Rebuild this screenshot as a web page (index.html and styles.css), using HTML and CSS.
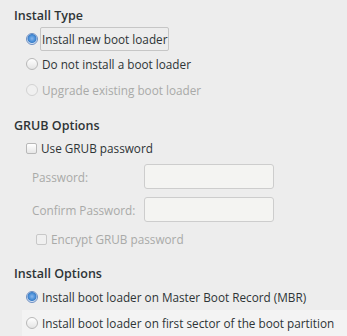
FILE: index.html
```html
<!DOCTYPE html>
<html lang="en">

<head>
    <meta charset="UTF-8">
    <title>Boot loader</title>
    <link rel="stylesheet" href="styles.css">
</head>

<body>
    <div class="page">
        <section class="group">
            <h2 class="group-title">Install Type</h2>
            <label class="option">
                <span class="radio checked"></span>
                <span class="text focused">Install new boot loader</span>
            </label>
            <label class="option">
                <span class="radio"></span>
                <span class="text">Do not install a boot loader</span>
            </label>
            <label class="option disabled">
                <span class="radio"></span>
                <span class="text">Upgrade existing boot loader</span>
            </label>
        </section>

        <section class="group grub">
            <h2 class="group-title">GRUB Options</h2>
            <label class="option check-row">
                <span class="check"></span>
                <span class="text">Use GRUB password</span>
            </label>
            <div class="field">
                <span class="field-label">Password:</span>
                <span class="entry"></span>
            </div>
            <div class="field">
                <span class="field-label">Confirm Password:</span>
                <span class="entry"></span>
            </div>
            <label class="option disabled sub">
                <span class="check"></span>
                <span class="text">Encrypt GRUB password</span>
            </label>
        </section>

        <section class="group opts">
            <h2 class="group-title">Install Options</h2>
            <label class="option">
                <span class="radio checked"></span>
                <span class="text">Install boot loader on Master Boot Record (MBR)</span>
            </label>
            <label class="option hover">
                <span class="radio"></span>
                <span class="text">Install boot loader on first sector of the boot partition</span>
            </label>
        </section>
    </div>
</body>

</html>
```

FILE: styles.css
```css
/* general */

body {
    margin: 0;
    background: #ededed;
    color: #2e3436;
    font-family: 'Open Sans', 'DejaVu Sans', sans-serif;
    font-size: 11.75px;
    overflow: hidden;
}

.page {
    padding-top: 6px;
}

.group-title {
    margin: 0 0 0 14px;
    height: 20px;
    line-height: 20px;
    font-size: 12.5px;
    font-weight: 600;
}

.option {
    display: flex;
    align-items: center;
    height: 25.5px;
    padding-left: 26px;
    gap: 2px;
}

.option .text {
    padding: 3px 1px;
    border: 1px solid transparent;
}

.option .text.focused {
    border-color: #c6c6c6;
    border-radius: 2px;
}

.option.disabled {
    color: #a9aaa8;
}

.option.hover {
    height: 26px;
    margin-left: 22px;
    padding-left: 4px;
    background: #f3f3f3;
}

/* radio buttons */

.radio {
    width: 10px;
    height: 10px;
    border-radius: 50%;
    border: 1px solid #b8b8b8;
    background: linear-gradient(#ffffff, #e4e4e4);
    flex-shrink: 0;
}

.radio.checked {
    border-color: #6e8fc2;
    background: radial-gradient(circle at 50% 45%, #8ab6ea 0, #4a90d9 3px, #3d7fc8 4px, #d7e5f5 5px);
}

.disabled .radio {
    border-color: #d2d2d2;
    background: #f0f0f0;
}

/* check boxes */

.check {
    width: 9px;
    height: 9px;
    border: 1px solid #b8b8b8;
    border-radius: 2px;
    background: linear-gradient(#ffffff, #e6e6e6);
    flex-shrink: 0;
}

.disabled .check {
    border-color: #c8c8c8;
    background: #f0f0f0;
}

.check-row {
    height: 24px;
}

.option.sub {
    padding-left: 36px;
    height: 26px;
}

/* text entries */

.field {
    display: flex;
    align-items: center;
    height: 33px;
    padding-left: 32px;
    color: #a9aaa8;
}

.field-label {
    width: 112px;
}

.entry {
    width: 128px;
    height: 23px;
    border: 1px solid #cdcdcd;
    border-radius: 3px;
    background: #f4f4f2;
}

.grub {
    margin-top: 13.5px;
}

.opts {
    margin-top: 12px;
}

.opts .option {
    height: 26px;
}
```
